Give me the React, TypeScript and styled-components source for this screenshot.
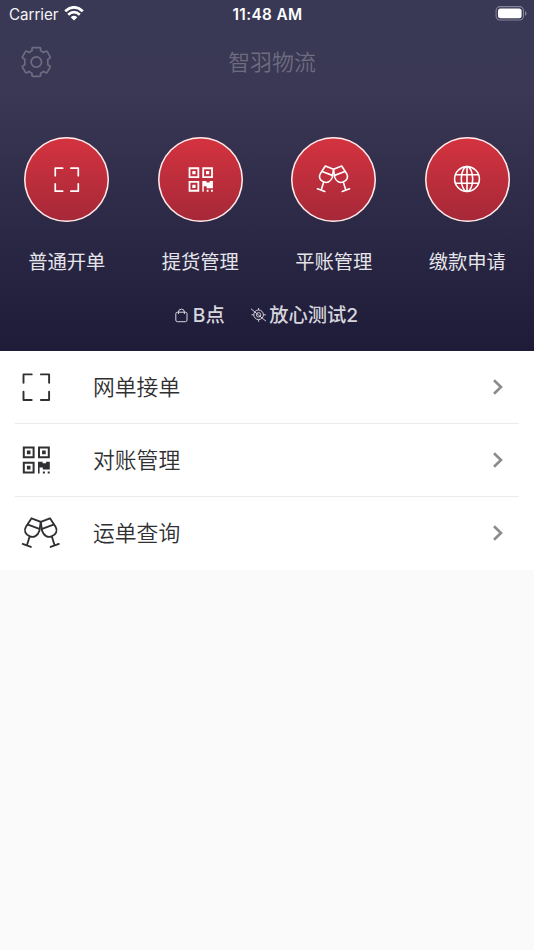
import React from "react";
import styled, { createGlobalStyle } from "styled-components";

const GlobalStyle = createGlobalStyle`
  * { box-sizing: border-box; }
  body { margin: 0; background: #fafafa; font-family: "Inter", "Noto Sans CJK SC", sans-serif; }
`;

const Screen = styled.div`
  width: 534px;
  height: 950px;
  background: #fafafa;
  overflow: hidden;
`;

const Hero = styled.header`
  height: 351px;
  display: flex;
  flex-direction: column;
  background: linear-gradient(#3a3955 0, #3a3854 90px, #1e1b39 351px);
`;

const StatusBar = styled.div`
  height: 28px;
  display: grid;
  grid-template-columns: 1fr auto 1fr;
  align-items: center;
  padding: 0 7px 0 9px;
  color: #fff;
  font-size: 15.4px;
`;

const Carrier = styled.div`
  display: flex;
  align-items: center;
  gap: 6px;
  font-size: 15.2px;
  letter-spacing: -0.05px;
  color: #f4f4f7;
  svg { margin-top: -2px; }
`;

const Clock = styled.div`
  font-size: 15.3px;
  font-weight: 600;
  letter-spacing: 0.42px;
  margin-left: -1px;
`;

const Battery = styled.div`
  display: flex;
  justify-content: flex-end;
  margin-top: -2px;
`;

const NavBar = styled.div`
  height: 68px;
  display: grid;
  grid-template-columns: 60px 1fr 60px;
  align-items: center;
  padding: 0 6px;
  color: #6e6c80;
`;

const GearButton = styled.button`
  border: 0;
  padding: 0 0 0 15px;
  background: none;
  color: inherit;
  display: flex;
`;

const NavTitle = styled.h1`
  margin: 0;
  padding: 0 0 2px 10px;
  font: 350 21.9px/32px "Noto Sans CJK SC", sans-serif;
  text-align: center;
`;

const Actions = styled.nav`
  display: grid;
  grid-template-columns: repeat(4, 1fr);
  margin-top: 41px;
`;

const Action = styled.div`
  display: flex;
  flex-direction: column;
  align-items: center;
`;

const Disc = styled.div`
  width: 85px;
  height: 85px;
  border-radius: 50%;
  box-shadow: inset 0 0 0 1.5px #f8eff0;
  background: linear-gradient(#d5333f, #a52838);
  color: #fff;
  display: flex;
  align-items: center;
  justify-content: center;
  padding-bottom: 1px;
`;

const ActionLabel = styled.span`
  margin-top: 25px;
  font: 400 19.3px/28px "Noto Sans CJK SC", sans-serif;
  color: #e6e6ea;
`;

const Account = styled.div`
  display: flex;
  justify-content: center;
  gap: 25.5px;
  margin-top: 26px;
  padding-right: 1px;
  color: #d6d5dc;
`;

const AccountItem = styled.div<{ $gap: number }>`
  display: flex;
  align-items: center;
  gap: ${(p) => p.$gap}px;
  font: 500 19.3px/28px "Inter", "Noto Sans CJK SC", sans-serif;
`;

const List = styled.main`
  background: #fff;
  height: 218.5px;
`;

const Row = styled.div<{ $last?: boolean }>`
  height: ${(p) => (p.$last ? 72 : 73)}px;
  margin: 0 15px;
  padding: 0 16px 0 6px;
  display: flex;
  align-items: center;
  border-bottom: ${(p) => (p.$last ? "0" : "1px solid #ebebec")};
  color: #303033;
`;

const RowIcon = styled.div`
  width: 72px;
  display: flex;
`;

const RowLabel = styled.span`
  flex: 1;
  padding-bottom: 2px;
  font: 350 21.8px/32px "Noto Sans CJK SC", sans-serif;
`;

const WifiIcon = () => (
  <svg width="20" height="15" viewBox="0 0 20 15" fill="none" stroke="#fff" strokeWidth="2.8">
    <path d="M1.2 5.2Q10-2.5 18.8 5.2" />
    <path d="M4.2 8.7Q10 3.6 15.8 8.7" />
    <path d="M10 14.5 6.7 11.2Q10 8.4 13.3 11.2Z" fill="#fff" stroke="none" />
  </svg>
);

const BatteryIcon = () => (
  <svg width="32" height="15" viewBox="0 0 32 15">
    <rect x="1.1" y=".6" width="27.4" height="13.4" rx="4" fill="none" stroke="#85839a" strokeWidth="1.1" />
    <rect x="3" y="2.4" width="23.6" height="9.8" rx="2.5" fill="#fff" />
    <path d="M30 5v4.8q1.5-.7 1.5-2.4T30 5Z" fill="#85839a" />
  </svg>
);

const GearIcon = () => (
  <svg width="30" height="32" viewBox="-15.3 -16 30 32" fill="none" stroke="currentColor" strokeWidth="1.7" strokeLinejoin="round">
    <circle r="5.2" />
    <path d="M-3.5-14.3H3.5Q4.3-14.3 4.3-13.4V-11.2Q5.8-10.6 7.2-9.4L9.6-10.7Q10.4-11.1 10.9-10.3L13.8-5.2Q14.2-4.4 13.5-4L11.4-2.6Q11.7 0 11.4 2.6L13.5 4Q14.2 4.4 13.8 5.2L10.9 10.3Q10.4 11.1 9.6 10.7L7.2 9.4Q5.8 10.6 4.3 11.2V13.4Q4.3 14.3 3.5 14.3H-3.5Q-4.3 14.3-4.3 13.4V11.2Q-5.8 10.6-7.2 9.4L-9.6 10.7Q-10.4 11.1-10.9 10.3L-13.8 5.2Q-14.2 4.4-13.5 4L-11.4 2.6Q-11.7 0-11.4-2.6L-13.5-4Q-14.2-4.4-13.8-5.2L-10.9-10.3Q-10.4-11.1-9.6-10.7L-7.2-9.4Q-5.8-10.6-4.3-11.2V-13.4Q-4.3-14.3-3.5-14.3Z" />
  </svg>
);

type IconProps = { size: number };

const ScanIcon = ({ size }: IconProps) => (
  <svg width={size} height={size} viewBox="0 0 30 30" fill="none" stroke="currentColor" strokeWidth="1.9" strokeLinecap="round" strokeLinejoin="round">
    <path d="M2.5 10.7V2.4H10.7M19.9 2.4H28.1V10.7M28.1 19.7V28H19.9M10.7 28H2.5V19.7" />
  </svg>
);

const QrIcon = ({ size }: IconProps) => (
  <svg width={size} height={size} viewBox="0 0 30 30" fill="none" stroke="currentColor" strokeWidth="2">
    <path d="M2.8 2.5H12.6V12.3H2.8ZM18 2.5H27.8V12.3H18ZM2.8 17.7H12.6V27.5H2.8Z" />
    <path
      d="M5.9 5.6H9.5V9.2H5.9ZM21.1 5.6H24.7V9.2H21.1ZM5.9 20.8H9.5V24.4H5.9ZM17 16.7H21.6V18.3H25.1V16.7H28.8V24.6H21.8V22.6H18.6V28.5H17ZM21.9 26.5H23.9V28.5H21.9ZM26.7 26.5H28.7V28.5H26.7Z"
      fill="currentColor"
      stroke="none"
    />
  </svg>
);

const Glass = () => (
  <>
    <path d="M93 235 121 246 117 273C112 289 99 294 88 290 74 285 69 272 76 261Z" />
    <path d="M82 254 117 267M87 291 79 317M66 313 91 322" />
  </>
);

const CheersIcon = ({ size }: IconProps) => (
  <svg width={size} height={size * 0.85} viewBox="61 228 120 102" fill="none" stroke="currentColor" strokeWidth="5.6" strokeLinecap="round" strokeLinejoin="round">
    <Glass />
    <g transform="translate(242 0) scale(-1 1)">
      <Glass />
    </g>
  </svg>
);

const GlobeIcon = () => (
  <svg width="28" height="28" viewBox="-14 -14 28 28" fill="none" stroke="currentColor" strokeWidth="1.6">
    <circle r="12.4" />
    <ellipse rx="5.7" ry="12.4" />
    <path d="M0-12.4V12.4M-11.7-4.3H11.7M-11.7 4.3H11.7" />
  </svg>
);

const BagIcon = () => (
  <svg width="13" height="15" viewBox="0 0 13 15" fill="none" stroke="currentColor" strokeWidth="1">
    <rect x=".8" y="4.2" width="11.2" height="9.5" rx="1.6" />
    <path d="M3.4 6V4Q3.6 1.1 6.4 1.1T9.4 4V6" />
  </svg>
);

const LocateOffIcon = () => (
  <svg width="17" height="16" viewBox="0 0 17 16" fill="none" stroke="currentColor" strokeWidth=".95">
    <circle cx="8.6" cy="7.8" r="4.8" />
    <circle cx="8.6" cy="7.8" r="2.2" />
    <path d="M1 1.8 16 14.2M8.6 1V3M8.6 12.6V14.8M1.5 7.8H3.8M13.4 7.8H15.8" />
  </svg>
);

const Chevron = () => (
  <svg width="10" height="16" viewBox="0 0 10 16" fill="none" stroke="#8b8b8d" strokeWidth="2.6">
    <path d="M1 1.2 8 8 1 14.8" />
  </svg>
);

const actions = [
  { label: "普通开单", icon: <ScanIcon size={27} /> },
  { label: "提货管理", icon: <QrIcon size={27} /> },
  { label: "平账管理", icon: <CheersIcon size={35} /> },
  { label: "缴款申请", icon: <GlobeIcon /> },
];

const rows = [
  { label: "网单接单", icon: <ScanIcon size={30} /> },
  { label: "对账管理", icon: <QrIcon size={30} /> },
  { label: "运单查询", icon: <CheersIcon size={39.5} /> },
];

export default function App() {
  return (
    <Screen>
      <GlobalStyle />
      <Hero>
        <StatusBar>
          <Carrier>Carrier <WifiIcon /></Carrier>
          <Clock>11:48 AM</Clock>
          <Battery><BatteryIcon /></Battery>
        </StatusBar>
        <NavBar>
          <GearButton aria-label="设置"><GearIcon /></GearButton>
          <NavTitle>智羽物流</NavTitle>
        </NavBar>
        <Actions>
          {actions.map((a) => (
            <Action key={a.label}>
              <Disc>{a.icon}</Disc>
              <ActionLabel>{a.label}</ActionLabel>
            </Action>
          ))}
        </Actions>
        <Account>
          <AccountItem $gap={5}><BagIcon />B点</AccountItem>
          <AccountItem $gap={2}><LocateOffIcon />放心测试2</AccountItem>
        </Account>
      </Hero>
      <List>
        {rows.map((r, i) => (
          <Row key={r.label} $last={i === rows.length - 1}>
            <RowIcon>{r.icon}</RowIcon>
            <RowLabel>{r.label}</RowLabel>
            <Chevron />
          </Row>
        ))}
      </List>
    </Screen>
  );
}
